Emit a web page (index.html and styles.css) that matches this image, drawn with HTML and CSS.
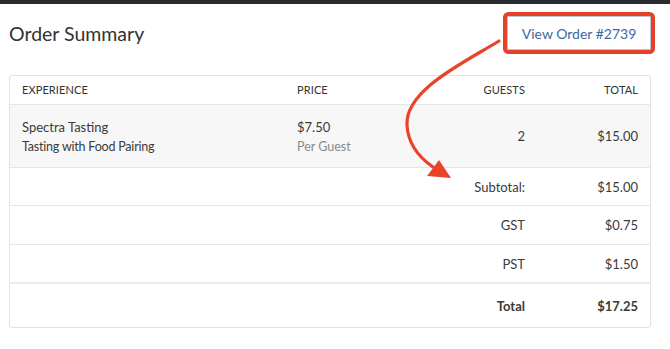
FILE: index.html
```html
<!DOCTYPE html>
<html>
<head>
<meta charset="utf-8">
<link rel="stylesheet" href="styles.css">
</head>
<body>
<div class="topbar"></div>
<main class="page">
  <header class="head">
    <h1 class="title">Order Summary</h1>
    <a class="view-btn" href="#">View Order #2739</a>
  </header>
  <div class="card">
    <table class="summary">
      <colgroup>
        <col class="c-exp"><col class="c-price"><col class="c-guests"><col class="c-total">
      </colgroup>
      <thead>
        <tr><th class="left">Experience</th><th class="left">Price</th><th class="right">Guests</th><th class="right">Total</th></tr>
      </thead>
      <tbody>
        <tr class="item">
          <td class="left"><div>Spectra Tasting</div><div class="sub">Tasting with Food Pairing</div></td>
          <td class="left"><div>$7.50</div><div class="muted">Per Guest</div></td>
          <td class="right">2</td>
          <td class="right">$15.00</td>
        </tr>
        <tr class="sum"><td colspan="2"></td><td class="right">Subtotal:</td><td class="right">$15.00</td></tr>
        <tr class="sum"><td colspan="2"></td><td class="right">GST</td><td class="right">$0.75</td></tr>
        <tr class="sum"><td colspan="2"></td><td class="right">PST</td><td class="right">$1.50</td></tr>
        <tr class="grand"><td colspan="2"></td><td class="right">Total</td><td class="right">$17.25</td></tr>
      </tbody>
    </table>
  </div>
</main>
<svg class="annot" width="670" height="349" viewBox="0 0 670 349">
  <path d="M499,41 C465,62 405,90 407,125 C408,145 420,158 433,167" fill="none" stroke="#e8432b" stroke-width="3.2" stroke-linecap="round"/>
  <polygon points="427,176 439,160 451,178" fill="#e8432b"/>
</svg>
</body>
</html>
```
FILE: styles.css
```css
* { box-sizing: border-box; }
html, body { margin: 0; padding: 0; background: #fff; }
body {
  font-family: "Lato", "Noto Sans", sans-serif;
  color: #3a3a3a;
  position: relative;
  width: 670px;
  height: 349px;
  overflow: hidden;
}
.topbar { height: 4px; background: #272c31; }
.page { padding: 0 19px 0 9px; }
.head {
  display: flex;
  justify-content: space-between;
  align-items: center;
  height: 58px;
}
.title {
  margin: 0;
  font-size: 19.5px;
  font-weight: 400;
  color: #333;
}
.view-btn {
  display: flex;
  align-items: center;
  justify-content: center;
  width: 144px;
  height: 34px;
  border: 1px solid #b9c6d8;
  border-radius: 2px;
  color: #3c68a6;
  font-size: 14px;
  text-decoration: none;
  box-shadow: 0 0 0 4px #e5412a;
}
.card {
  margin-top: 13px;
  border: 1px solid #e3e3e3;
  border-radius: 3px;
  overflow: hidden;
}
.summary {
  width: 100%;
  border-collapse: collapse;
  table-layout: fixed;
  font-size: 13px;
}
.c-exp { width: 275px; }
.c-price { width: 150px; }
.c-guests { width: 102px; }
.c-total { width: 113px; }
.summary th, .summary td { padding: 0 12px; }
.summary th {
  font-size: 11px;
  font-weight: 400;
  text-transform: uppercase;
  color: #333;
  height: 28px;
  letter-spacing: 0.1px;
}
.left { text-align: left; }
.right { text-align: right; }
.item { background: #f7f7f7; border-top: 1px solid #e5e5e5; }
.item td { height: 63px; line-height: 19px; padding-top: 2px; }
.sub { font-size: 12.5px; letter-spacing: -0.2px; }
.muted { color: #8a8a8a; font-size: 12.5px; }
.sum { border-top: 1px solid #e5e5e5; }
.sum td { height: 38px; padding-top: 1px; }
.sum + .sum td { height: 39px; }
.grand { border-top: 2px solid #ebebeb; }
.grand td { height: 44px; font-weight: 700; }
.annot { position: absolute; left: 0; top: 0; pointer-events: none; }
```
